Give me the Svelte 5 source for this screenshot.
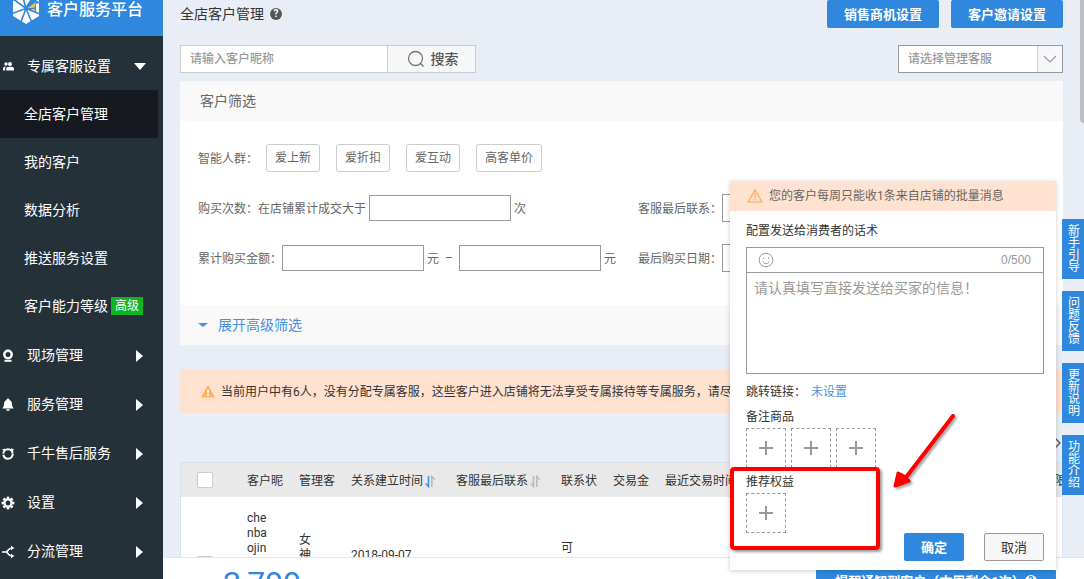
<script>
  const subItems = ['全店客户管理', '我的客户', '数据分析', '推送服务设置', '客户能力等级'];
  const groups = [
    { icon: 'cam', label: '现场管理' },
    { icon: 'bell', label: '服务管理' },
    { icon: 'ring', label: '千牛售后服务' },
    { icon: 'gear', label: '设置' },
    { icon: 'flow', label: '分流管理' }
  ];
  const crowds = ['爱上新', '爱折扣', '爱互动', '高客单价'];
  const tabs = ['新手引导', '问题反馈', '更新说明', '功能介绍'];
  const teeth = [0, 45, 90, 135, 180, 225, 270, 315];
</script>

{#snippet icon(name)}
  <svg class="nav-icon" viewBox="0 0 14 14" width="14" height="14" aria-hidden="true">
    {#if name === 'people'}
      <circle cx="5" cy="4" r="1.700" /><circle cx="9" cy="4" r="2" />
      <path d="M2 10.500V8.200Q2.500 6.500 4.800 6.500Q4 7.500 4 10.500ZM5.200 10.500V8.500Q5.500 7 7.500 6.800H10.500Q12.800 7 13 8.500V10.500Z" />
    {:else if name === 'cam'}
      <circle cx="7" cy="5.500" r="3.700" class="line" />
      <path d="M3.500 10.800H10.500V12.800H3.500Z" />
    {:else if name === 'bell'}
      <path d="M7 .5C8 .5 8.500 1.200 8.500 2C10.500 2.800 11 4.500 11 6.500C11 8.500 12 9 12.500 10.500H1.500C2 9 3 8.500 3 6.500C3 4.500 3.500 2.800 5.500 2C5.500 1.200 6 .5 7 .5ZM5 11.200H9Q8.500 13 7 13T5 11.200Z" />
    {:else if name === 'ring'}
      <circle cx="7" cy="7" r="4.700" class="line ring" stroke-dasharray="13.600 1.160" />
      <path d="M1 2.500L4 1.500L4 4.500ZM10 1L13 2.500L11 5Z" />
    {:else if name === 'gear'}
      <circle cx="7" cy="7" r="3.600" class="line" />
      {#each teeth as t}<path d="M5.700 .6H8.300V3H5.700Z" transform="rotate({t} 7 7)" />{/each}
    {:else}
      <path class="line thin" d="M1 7H5C7 7 7 3 11 3M5 7C7 7 7 11 11 11" />
      <path d="M10 .8L13.500 3L10 5.200ZM10 8.800L13.500 11L10 13.200Z" />
    {/if}
  </svg>
{/snippet}

{#snippet sort(active)}
  <svg class="sort" class:active viewBox="0 0 11 13" width="11" height="13" aria-hidden="true">
    <path class="down" d="M3.500 1V11.500L.8 8.500" /><path class="up" d="M6.800 12V1.500L9.800 4.500" />
  </svg>
{/snippet}

{#snippet plus(label)}
  <button class="slot" aria-label={label}>
    <svg viewBox="0 0 16 16" width="16" height="16"><path d="M8 1V15M1 8H15" /></svg>
  </button>
{/snippet}

<div class="app">
  <aside>
    <div class="brand">
      <svg viewBox="0 0 28 30" width="28" height="30" aria-hidden="true">
        <path fill="#fff" d="M14 0L27 6V22L14 30L1 22V7Z" />
        <path fill="#2f88dd" d="M13 14L20 3L28 9V17L22 18Z" />
        <path fill="#fff" d="M24 10L27 9V18L24 17Z" />
        <path fill="#f5c842" d="M15 14.500L24 8L22.500 13.500ZM19 15.500L22 14.500L24 19Z" />
        <path stroke="#2f88dd" stroke-width="1.600" d="M14 14.500L0 4M14 14.500L0 19.500M14 14.500L9 28M14 14.500L20 29M14 14.500L28 20M14 14.500L10 0" />
      </svg>
      <span>客户服务平台</span>
    </div>
    <nav>
      <a class="group" href="#service">{@render icon('people')}<span>专属客服设置</span><i class="caret down"></i></a>
      {#each subItems as item, i}
        <a class="sub" class:current={i === 0} href="#sub{i}">{item}{#if i === 4}<b>高级</b>{/if}</a>
      {/each}
      {#each groups as g}
        <a class="group" href="#{g.icon}">{@render icon(g.icon)}<span>{g.label}</span><i class="caret"></i></a>
      {/each}
    </nav>
  </aside>

  <main>
    <div class="content">
      <header>
        <h1>全店客户管理</h1>
        <span class="help">?</span>
        <div class="actions">
          <button class="primary">销售商机设置</button>
          <button class="primary">客户邀请设置</button>
        </div>
      </header>

      <div class="search-row">
        <form class="search">
          <input aria-label="客户昵称" placeholder="请输入客户昵称" />
          <button type="button">
            <svg viewBox="0 0 18 18" width="18" height="18"><circle cx="8.500" cy="8.500" r="7" /><path d="M13 13L16.500 16.500" /></svg>
            搜索
          </button>
        </form>
        <div class="select">
          <select aria-label="管理客服"><option>请选择管理客服</option></select>
          <span class="arrow"><svg viewBox="0 0 14 8" width="14" height="8"><path d="M1 1L7 7L13 1" /></svg></span>
        </div>
      </div>

      <section class="panel">
        <h2>客户筛选</h2>
        <div class="filters">
          <div class="line-row">
            <span>智能人群：</span>
            <div class="crowds">{#each crowds as c}<button>{c}</button>{/each}</div>
          </div>
          <div class="fields">
            <div class="line-row">
              <label for="times">购买次数：在店铺累计成交大于</label><input id="times" /><span>次</span>
            </div>
            <div class="line-row"><label for="contact">客服最后联系：</label><input id="contact" class="date" /></div>
            <div class="line-row">
              <label for="min">累计购买金额：</label><input id="min" class="after-colon" /><span>元</span><span class="dash">–</span>
              <input aria-label="最高金额" /><span>元</span>
            </div>
            <div class="line-row"><label for="bought">最后购买日期：</label><input id="bought" class="date" /></div>
          </div>
        </div>
        <button class="expand"><i></i>展开高级筛选</button>
      </section>

      <p class="notice">
        <svg viewBox="0 0 14 13" width="14" height="13"><path fill="#ffb35c" stroke="#ffb35c" stroke-linejoin="round" d="M7 1L13.300 12H.7Z" /><path stroke="#fff" stroke-width="1.800" d="M7 4.500V8.300M7 9.300V11" /></svg>
        <span>当前用户中有6人，没有分配专属客服，这些客户进入店铺将无法享受专属接待等专属服务，请尽</span>
      </p>

      <table>
        <colgroup><col class="w-check" /><col class="w-s" /><col class="w-s" /><col class="w-l" /><col class="w-l" /><col class="w-s" /><col class="w-s" /><col /><col class="w-end" /></colgroup>
        <thead>
          <tr>
            <th><input type="checkbox" aria-label="全选" /></th>
            <th>客户昵</th><th>管理客</th>
            <th>关系建立时间{@render sort(true)}</th>
            <th>客服最后联系{@render sort(false)}</th>
            <th>联系状</th><th>交易金</th><th>最近交易时间</th><th>限</th>
          </tr>
        </thead>
        <tbody>
          <tr>
            <td><input type="checkbox" aria-label="选择客户" /></td>
            <td>che<br />nba<br />ojin<br />&nbsp;<br />&nbsp;<br />&nbsp;</td>
            <td>女<br />神<br />&nbsp;</td><td>2018-09-07</td><td></td><td>可<br />&nbsp;</td><td></td><td></td><td></td>
          </tr>
        </tbody>
      </table>
    </div>

    <footer>
      <strong>2,799</strong>
      <button class="primary">提醒通知到客户（本周剩余1次）<span class="help light">?</span></button>
    </footer>
  </main>

  <i class="scrollbar"></i>
  <svg class="next" viewBox="0 0 8 12" width="8" height="12" aria-hidden="true"><path d="M1 1L6 6L1 11" /></svg>
  <div class="tabs">{#each tabs as t}<a href="#{t}">{t}</a>{/each}</div>

  <div class="dialog" role="dialog" aria-label="批量消息">
    <p class="warn">
      <svg viewBox="0 0 16 14" width="16" height="14"><path d="M8 1L15 13H1ZM8 4V9M8 10V11.500" /></svg>
      您的客户每周只能收1条来自店铺的批量消息
    </p>
    <div class="body">
      <label for="msg">配置发送给消费者的话术</label>
      <div class="editor">
        <div class="tools">
          <svg viewBox="0 0 16 16" width="16" height="16"><circle cx="8" cy="8" r="6.800" /><path d="M4.500 9.500Q8 14 11.500 9.500M5.500 5.500V7M10.500 5.500V7" /></svg>
          <span>0/500</span>
        </div>
        <textarea id="msg" placeholder="请认真填写直接发送给买家的信息！"></textarea>
      </div>
      <div class="jump">跳转链接：<a href="#link">未设置</a></div>
      <div class="caption">备注商品</div>
      <div class="slots">{@render plus('添加商品1')}{@render plus('添加商品2')}{@render plus('添加商品3')}</div>
      <div class="caption second">推荐权益</div>
      <div class="slots">{@render plus('添加权益')}</div>
      <div class="buttons"><button class="primary">确定</button><button class="cancel">取消</button></div>
    </div>
    <i class="mark"></i>
    <svg class="pointer" viewBox="0 0 66 82" width="66" height="82" aria-hidden="true">
      <path d="M61 6L15 66" stroke="#f00" stroke-width="4" stroke-linecap="round" />
      <path d="M6 63L3 76L17 71L12 66Z" fill="#f00" stroke="#f00" stroke-width="3" stroke-linejoin="round" />
    </svg>
  </div>
</div>

<style>
  :global(body) { margin: 0; }
  * { box-sizing: border-box; }
  .app {
    position: relative; display: flex; height: 100vh; overflow: hidden;
    background: #e9eef6; color: #333; font: 12px/15px Roboto, "Noto Sans CJK SC", sans-serif;
  }
  button, input, select, textarea { font: inherit; color: inherit; margin: 0; border-radius: 0; }
  button { cursor: pointer; padding: 0; border: 0; background: none; }
  a { text-decoration: none; color: inherit; }
  h1, h2, p { margin: 0; font-weight: 400; }
  svg { fill: none; flex: none; }

  aside { width: 163px; flex: none; background: #253139; color: #fff; }
  .brand {
    display: flex; align-items: center; gap: 7px; height: 60px; margin-top: -24px; padding: 6px 0 0 12px;
    background: #2f88dd; font-size: 16px; font-weight: 500;
  }
  nav { padding-top: 5px; font-size: 14px; }
  .group { display: flex; align-items: center; height: 49px; padding: 2px 20px 0 1px; }
  .group span { flex: 1; margin-left: 12px; }
  .nav-icon { fill: #fff; }
  .nav-icon .line { fill: none; stroke: #fff; stroke-width: 2.4; }
  .nav-icon .thin { stroke-width: 1.6; }
  .nav-icon .ring { stroke-width: 2; }
  .caret { border: 6px solid transparent; border-left: 7px solid #fff; border-right: 0; }
  .caret.down { border: 6px solid transparent; border-top: 7px solid #fff; border-bottom: 0; margin-right: -3px; }
  .sub { display: flex; align-items: center; height: 48px; margin-right: 5px; padding-left: 24px; }
  .current { background: #161a20; }
  .sub b { margin-left: 3px; padding: 0 4px; background: #10b526; font: 12px/18px Roboto, "Noto Sans CJK SC", sans-serif; }

  main { flex: 1; min-width: 0; display: flex; flex-direction: column; }
  .content { flex: 1; min-height: 0; overflow: hidden; padding: 0 21px 0 17px; }
  header { display: flex; align-items: center; height: 28px; }
  h1 { font-size: 14px; }
  .help {
    width: 12px; height: 12px; margin-left: 6px; border-radius: 50%; background: #555; color: #fff;
    font: bold 10px/12px Roboto, sans-serif; text-align: center;
  }
  .help.light { background: #fff; color: #2f88dd; }
  .actions { display: flex; gap: 12px; margin-left: auto; }
  .primary { background: #2f88dd; color: #fff; border-radius: 2px; font-weight: 700; font-size: 13px; }
  .actions .primary { width: 112px; height: 28px; }

  .search-row { display: flex; justify-content: space-between; margin: 17px 0 8px; height: 28px; }
  .search { display: flex; }
  .search input { width: 207px; padding: 0 9px; border: 1px solid #ccc; border-right: 0; background: #fff; font-weight: 500; }
  ::placeholder { color: #999; opacity: 1; }
  .search button {
    display: flex; align-items: center; justify-content: center; gap: 6px; width: 89px; padding-left: 2px; border: 1px solid #ccc;
    background: #f6f7f9; font-size: 14px; font-weight: 500; color: #555;
  }
  .search svg { stroke: #777; stroke-width: 1.3; }
  .select { display: flex; width: 165px; border: 1px solid #999; background: #fff; }
  .select select { flex: 1; min-width: 0; appearance: none; border: 0; padding: 0 9px; background: none; color: #999; font-weight: 500; }
  .arrow { display: flex; align-items: center; justify-content: center; width: 25px; border-left: 1px solid #ccc; background: #f6f7f9; }
  .arrow svg { stroke: #999; stroke-width: 1.2; }

  .panel { background: #fff; color: #666; }
  h2 { height: 40px; padding: 0 20px; background: #f9f9f9; font-size: 14px; line-height: 40px; }
  .filters { height: 184px; padding: 23px 0 0 18px; }
  .line-row { display: flex; align-items: center; gap: 3px; height: 28px; white-space: nowrap; }
  .line-row span, .line-row label { padding-top: 2px; }
  .line-row .dash { padding: 0 3px; }
  .crowds { display: flex; gap: 16px; margin-left: 5px; }
  .crowds button { height: 28px; padding: 0 8px; border: 1px solid #ccc; border-radius: 3px; }
  .fields { display: grid; grid-template-columns: 440px 1fr; row-gap: 22px; margin-top: 22px; }
  .fields input { width: 142px; height: 26px; border: 1px solid #999; background: #fff; }
  .fields .date { height: 28px; margin-left: -3px; }
  .fields .after-colon { margin-left: -3px; }
  .expand { display: flex; align-items: center; gap: 10px; width: 100%; height: 40px; padding: 0 18px; background: #f9f9f9; color: #4a90e2; font-size: 14px; }
  .expand i { border: 5px solid transparent; border-top: 4px solid #4a90e2; border-bottom: 0; }

  .notice { display: flex; align-items: center; gap: 6px; height: 44px; margin: 24px 0 49px; padding: 0 21px; overflow: hidden; background: #ffe1cf; white-space: nowrap; }
  .notice span { padding-top: 3px; }

  table { width: 100%; table-layout: fixed; border-collapse: separate; border-spacing: 0; border: 1px solid #d5e3f3; background: #fff; }
  .w-check { width: 66px; } .w-s { width: 52px; } .w-l { width: 105px; } .w-end { width: 8px; }
  th { height: 34px; padding: 2px 0 0; background: #e9e9e9; font-weight: 400; text-align: left; white-space: nowrap; overflow: hidden; }
  td { height: 117px; padding: 0; }
  th:first-child { padding: 0 0 0 16px; }
  td:first-child { padding: 16px 0 0 16px; }
  input[type='checkbox'] { display: block; appearance: none; width: 16px; height: 16px; border: 1px solid #ccc; border-radius: 2px; background: #fff; }
  .sort { margin-left: 2px; vertical-align: -3px; stroke: #bbb; stroke-width: 1.6; }
  .sort.active .down { stroke: #4a90e2; }

  footer { display: flex; justify-content: space-between; align-items: flex-start; height: 22px; padding: 11px 28px 0 60px; border-top: 1px solid #e5e5e5; background: #fff; overflow: hidden; }
  footer strong { color: #2f88dd; font: 400 32px/28px Roboto, sans-serif; }
  footer .primary { display: flex; flex: none; align-items: center; justify-content: center; width: 240px; height: 24px; }
  footer .help { margin-left: 0; }

  .scrollbar { position: absolute; top: -8px; right: 0; width: 4px; height: 131px; border-radius: 4px 0 0 4px; background: #bcc0c4; }
  .next { position: absolute; top: 437px; right: 22px; stroke: #555; stroke-width: 1.3; }
  .tabs { position: absolute; top: 219px; right: 0; display: grid; gap: 12px; }
  .tabs a { width: 22px; height: 60px; padding: 6px 4px 6px 6px; background: #2f88dd; color: #fff; line-height: 12px; word-break: break-all; }

  .dialog { position: absolute; top: 181px; right: 28px; width: 326px; background: #fff; box-shadow: 0 1px 5px rgba(0, 0, 0, .2); }
  .warn { display: flex; align-items: center; gap: 6px; height: 30px; padding: 0 17px; background: #ffe1cf; color: #666; }
  .warn svg { stroke: #ffab4c; stroke-width: 1.2; }
  .body { padding: 13px 12px 9px 16px; }
  .body label { display: block; }
  .editor { height: 127px; margin-top: 8px; border: 1px solid #999; display: flex; flex-direction: column; }
  .tools { display: flex; align-items: center; justify-content: space-between; height: 25px; padding: 0 12px 0 11px; border-bottom: 1px solid #999; color: #999; font: 12px "Liberation Sans", sans-serif; }
  .tools svg { stroke: #999; }
  textarea { flex: 1; padding: 5px 7px; border: 0; outline: 0; resize: none; font-size: 14px; line-height: 20px; background: #fff; }
  .jump { margin-top: 11px; }
  .jump a { margin-left: 5px; color: #4a90e2; }
  .caption { margin: 10px 0 3px; }
  .caption.second { margin-top: 7px; }
  .slots { display: flex; gap: 5px; }
  .slot { display: flex; align-items: center; justify-content: center; width: 40px; height: 40px; border: 1px dashed #999; }
  .slot svg { stroke: #999; stroke-width: 2; }
  .buttons { display: flex; justify-content: flex-end; gap: 20px; }
  .buttons button { width: 60px; height: 28px; font-size: 13px; }
  .cancel { border: 1px solid #999; border-radius: 2px; background: #f6f7f9; }
  .mark { position: absolute; left: 0; top: 286px; width: 150px; height: 83px; border: 4px solid #f00; border-radius: 4px; box-shadow: 2px 2px 3px rgba(0, 0, 0, .4); }
  .pointer { position: absolute; left: 162px; top: 229px; filter: drop-shadow(2px 2px 1px rgba(0, 0, 0, .35)); }
</style>
